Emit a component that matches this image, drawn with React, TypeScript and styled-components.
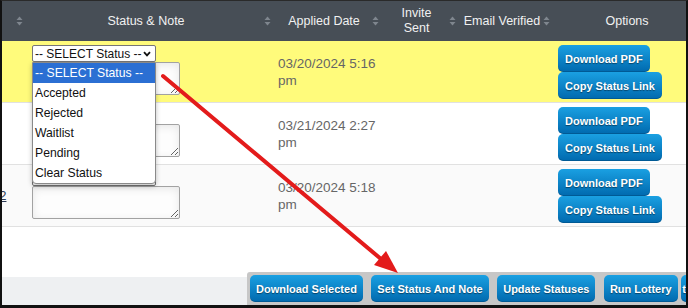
import React from 'react'
import styled, { createGlobalStyle } from 'styled-components'

const COLUMNS = '26px 248px 108px 77px 94px 144px'

const statusOptions = ['-- SELECT Status --', 'Accepted', 'Rejected', 'Waitlist', 'Pending', 'Clear Status']

interface IApplicant {
  id: string
  applied: string
  tint: string
  open?: boolean
  link?: string
}

const applicants: IApplicant[] = [
  { id: 'a1', applied: '03/20/2024 5:16 pm', tint: '#fffb7b', open: true },
  { id: 'a2', applied: '03/21/2024 2:27 pm', tint: '#ffffff' },
  { id: 'a3', applied: '03/20/2024 5:18 pm', tint: '#fafafa', link: '12' },
]

const SortIcon = () => (
  <svg width="7" height="10" viewBox="0 0 7 10">
    <path d="M3.5 0.5 L6.5 4 L0.5 4 Z" fill="#7f868e" />
    <path d="M3.5 9.5 L6.5 6 L0.5 6 Z" fill="#7f868e" />
  </svg>
)

const Chevron = () => (
  <svg width="8" height="6" viewBox="0 0 8 6">
    <path d="M1 1.2 L4 4.4 L7 1.2" fill="none" stroke="#111" strokeWidth="1.8" />
  </svg>
)

const App = () => {
  return (
    <>
      <GlobalStyle />
      <Frame>
        <Table>
          <Head>
            <HeadCell>
              <span />
              <SortIcon />
            </HeadCell>
            <HeadCell>
              <span>Status &amp; Note</span>
              <SortIcon />
            </HeadCell>
            <HeadCell>
              <span>Applied Date</span>
              <SortIcon />
            </HeadCell>
            <HeadCell>
              <span>
                Invite
                <br />
                Sent
              </span>
              <SortIcon />
            </HeadCell>
            <HeadCell>
              <span>Email Verified</span>
              <SortIcon />
            </HeadCell>
            <HeadCell plain>
              <span>Options</span>
            </HeadCell>
          </Head>

          {applicants.map(a => (
            <Row key={a.id} tint={a.tint}>
              <IdCell>{a.link && <IdLink>{a.link}</IdLink>}</IdCell>
              <NoteCell>
                <SelectWrap raised={a.open}>
                  <SelectBox>
                    <span>-- SELECT Status --</span>
                    <Chevron />
                  </SelectBox>
                  {a.open && (
                    <OptionList>
                      {statusOptions.map((o, i) => (
                        <OptionItem key={o} active={i === 0}>
                          {o}
                        </OptionItem>
                      ))}
                    </OptionList>
                  )}
                </SelectWrap>
                <NoteArea readOnly defaultValue="" />
              </NoteCell>
              <DateCell>{a.applied}</DateCell>
              <Cell />
              <Cell />
              <OptionsCell>
                <BlueButton>Download PDF</BlueButton>
                <BlueButton>Copy Status Link</BlueButton>
              </OptionsCell>
            </Row>
          ))}
        </Table>

        <Spacer />

        <Footer>
          <FooterFill />
          <ButtonGroup>
            <BlueButton>Download Selected</BlueButton>
            <BlueButton>Set Status And Note</BlueButton>
            <BlueButton>Update Statuses</BlueButton>
            <BlueButton>Run Lottery</BlueButton>
            <TrailingButton>text</TrailingButton>
          </ButtonGroup>
        </Footer>

        <Arrow viewBox="0 0 688 308" width="688" height="308">
          <line x1="163" y1="76" x2="381" y2="259" stroke="#e31b1b" strokeWidth="4" strokeLinecap="round" />
          <polygon points="398,273 374,265 386,251" fill="#e31b1b" />
        </Arrow>
      </Frame>
    </>
  )
}

const GlobalStyle = createGlobalStyle`
  html, body {
    margin: 0;
    padding: 0;
    background: #fff;
  }

  body {
    font-family: 'Liberation Sans', Arial, sans-serif;
  }
`

const Frame = styled.div`
  position: relative;
  display: flex;
  flex-direction: column;

  width: 688px;
  height: 308px;
  box-sizing: border-box;
  overflow: hidden;

  border-top: 1px solid #2a2a2a;
  border-left: 2px solid #111;
  border-right: 2px solid #111;
  border-bottom: 3px solid #111;

  background: #fff;
`

const Table = styled.div`
  width: 697px;
  flex-shrink: 0;
`

const Head = styled.div`
  display: grid;
  grid-template-columns: ${COLUMNS};

  height: 40px;

  font-size: 12.5px;
  line-height: 15px;
  color: #f1f1f1;

  background: #474e56;
`

const HeadCell = styled.div<{ plain?: boolean }>`
  display: grid;
  grid-template-columns: ${p => (p.plain ? '1fr' : '1fr auto')};
  align-items: center;

  padding-right: ${p => (p.plain ? '0' : '5px')};

  text-align: center;

  svg {
    display: block;
  }
`

const Row = styled.div<{ tint: string }>`
  display: grid;
  grid-template-columns: ${COLUMNS};

  height: 61px;

  border-bottom: 1px solid #e1e1e1;

  background: ${p => p.tint};
`

const Cell = styled.div``

const IdCell = styled.div`
  display: flex;
  align-items: center;

  overflow: hidden;
`

const IdLink = styled.span`
  margin-left: -10px;

  font-size: 13px;
  color: #2b3a55;
  text-decoration: underline;
`

const NoteCell = styled.div`
  display: flex;
  flex-direction: column;
  align-items: flex-start;

  padding: 4px 0 0 4px;
`

const SelectWrap = styled.div<{ raised?: boolean }>`
  position: relative;
  z-index: ${p => (p.raised ? 4 : 1)};
`

const SelectBox = styled.div`
  display: flex;
  align-items: center;
  justify-content: space-between;

  width: 124px;
  height: 17px;
  box-sizing: border-box;

  padding: 0 4px 0 2px;

  border: 1px solid #767676;
  border-radius: 2px;

  font-size: 12px;
  white-space: nowrap;
  color: #111;

  background: #fff;
`

const OptionList = styled.div`
  position: absolute;
  top: 17px;
  left: 0;

  width: 124px;
  box-sizing: border-box;

  border: 1px solid #8a8a8a;
  border-radius: 0 0 4px 4px;

  background: #fff;
  box-shadow: 0 2px 5px rgba(0, 0, 0, 0.25);
`

const OptionItem = styled.div<{ active?: boolean }>`
  height: 20px;

  padding-left: 2px;

  font-size: 12.2px;
  line-height: 20px;
  white-space: nowrap;
  color: ${p => (p.active ? '#fff' : '#111')};

  background: ${p => (p.active ? '#2b6fd3' : 'transparent')};
`

const NoteArea = styled.textarea`
  width: 148px;
  height: 33px;
  box-sizing: border-box;

  margin: 0;

  border: 1px solid #a2a2a2;
  border-radius: 2px;

  background: #fdfdfd;
  box-shadow: inset 0 2px 8px rgba(0, 0, 0, 0.09);
`

const DateCell = styled.div`
  align-self: center;

  padding: 0 2px;

  font-size: 13.5px;
  line-height: 17px;
  color: #666;
`

const OptionsCell = styled.div`
  display: flex;
  flex-direction: column;
  align-items: flex-start;

  padding: 4px 0 0 3px;
`

const BlueButton = styled.button`
  display: block;

  height: 27px;
  padding: 0 7px;

  border: none;
  border-radius: 5px;

  font-family: 'Liberation Sans', Arial, sans-serif;
  font-size: 11px;
  font-weight: bold;
  white-space: nowrap;
  color: #fff;
  text-shadow: 0 1px 1px rgba(0, 0, 0, 0.45);

  background: linear-gradient(#1aa0e2, #0069ae);
  box-shadow: inset 0 -1px 0 rgba(0, 0, 0, 0.15);
`

const Spacer = styled.div`
  flex: 1;
`

const Footer = styled.div`
  display: flex;
  align-items: flex-end;
`

const FooterFill = styled.div`
  flex-shrink: 0;

  width: 245px;
  height: 28px;

  background: #eef0f2;
`

const ButtonGroup = styled.div`
  display: flex;
  gap: 8.5px;
  flex-shrink: 0;

  padding: 3px;
  border-top-left-radius: 3px;

  background: #c7c7c7;

  ${BlueButton} {
    padding: 0 6px;
  }
`

const TrailingButton = styled(BlueButton)`
  margin-left: -5px;

  ${ButtonGroup} & {
    padding: 0 1px;
  }
`

const Arrow = styled.svg`
  position: absolute;
  top: -1px;
  left: -2px;
  z-index: 5;

  pointer-events: none;
`

export default App
